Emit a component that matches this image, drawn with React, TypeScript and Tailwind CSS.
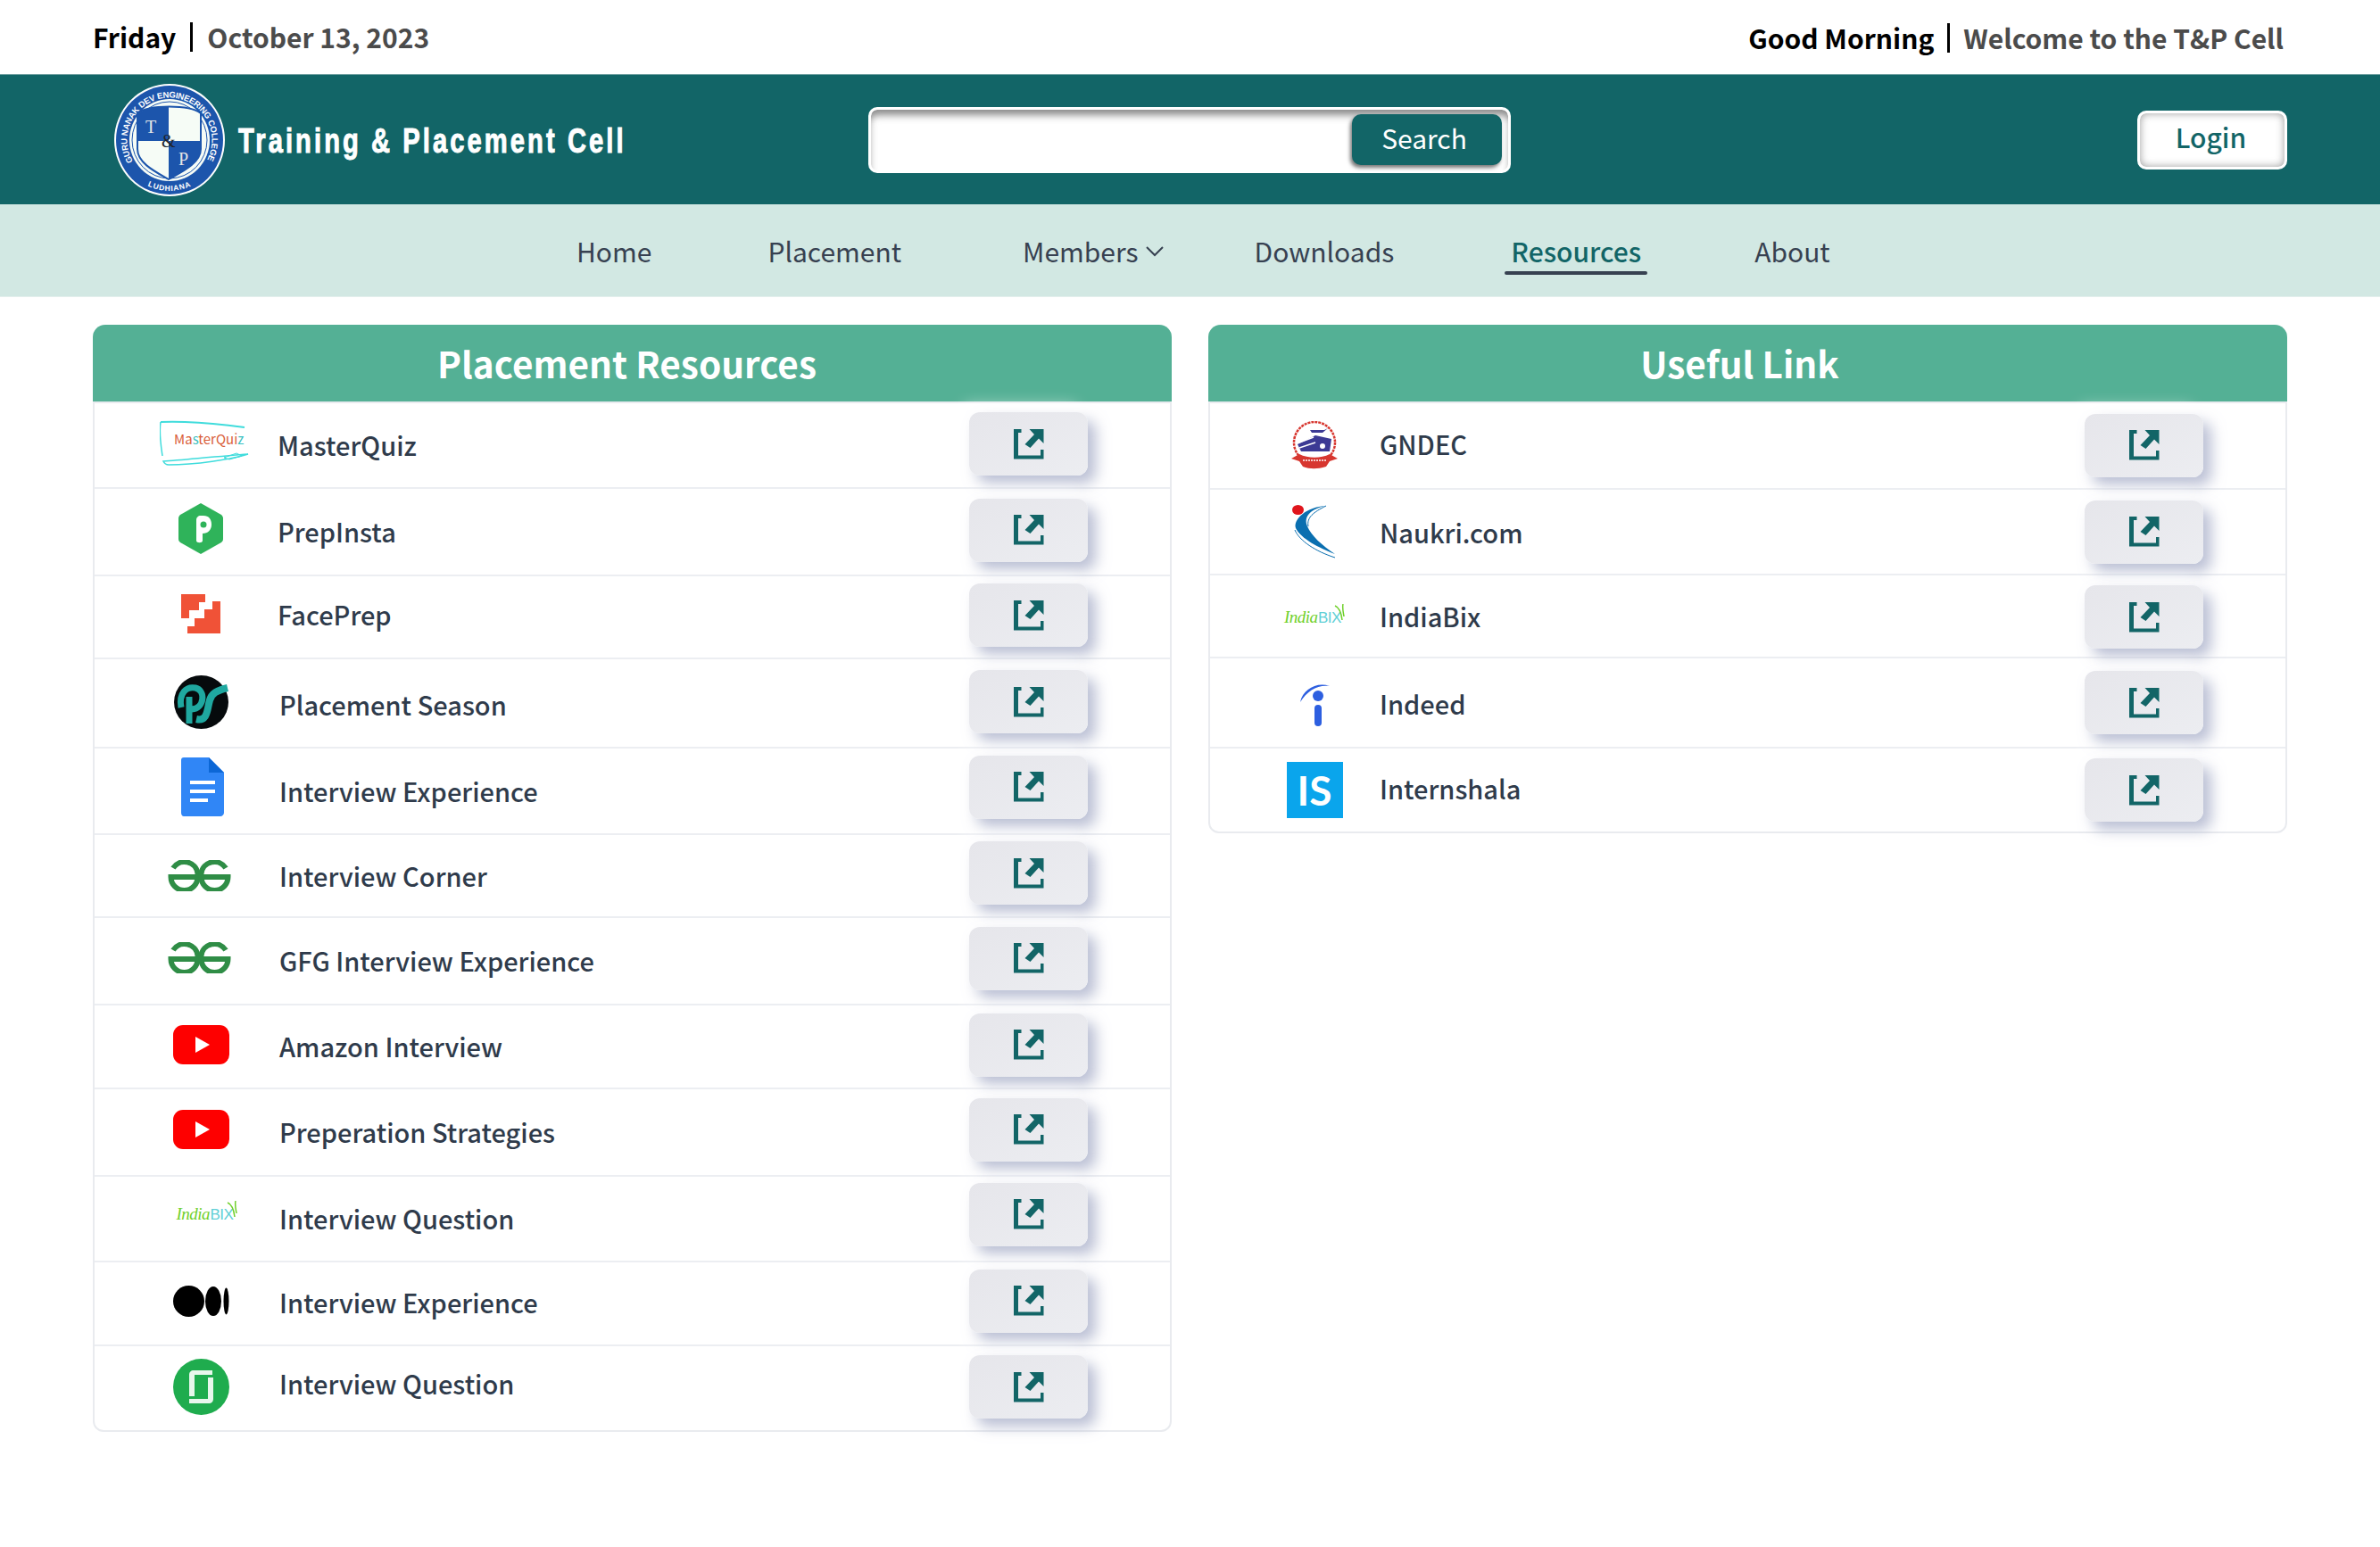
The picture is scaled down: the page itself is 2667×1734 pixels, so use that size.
import type { ReactNode } from 'react'

const sans = "font-['Noto_Sans_CJK_SC','Source_Sans_3','Noto_Sans',sans-serif]"

function LinkBtn({ offset }: { offset: string }) {
  return (
    <button
      className={`relative z-10 flex h-[71px] w-[133px] items-center justify-center rounded-xl bg-gradient-to-br from-[#e6e6eb] to-[#ecedf1] shadow-[9px_9px_16px_rgba(163,170,198,0.75),-9px_-9px_16px_rgba(255,255,255,0.5)] ${offset}`}
    >
      <svg width="34" height="34" viewBox="0 0 34 34" fill="#126567">
        <path d="M0 0H8.5V4H5V29.5H30V23H33.5V33.5H0Z" />
        <path d="M17.5 0H33.5V16L28 10.5L18.5 21L12.5 17L23 6Z" />
      </svg>
    </button>
  )
}

function MasterQuizLogo() {
  return (
    <div className="relative h-[52px] w-[100px]">
      <svg className="absolute inset-0" width="100" height="52" viewBox="0 0 100 52" fill="none" stroke="#3fdcdc">
        <path d="M1 2C25 1 50 2 95 8" strokeWidth="2" />
        <path d="M1 2C-1 14 1 26 3 40" strokeWidth="1.5" />
        <path d="M4 46C30 44 70 40 99 38C80 44 40 50 10 50C7 50 5 48 4 46Z" strokeWidth="1.5" />
        <path d="M72 42L86 37L92 40L78 44Z" strokeWidth="1" />
      </svg>
      <span className="absolute left-[16px] top-[11px] font-['Noto_Sans_CJK_SC',sans-serif] text-[15px] leading-[20px] text-[#d9603a]">
        Ma<span className="text-[#3bbfc0]">s</span>terQui<span className="text-[#3bbfc0]">z</span>
      </span>
    </div>
  )
}

function PrepInstaLogo() {
  return (
    <svg width="50" height="57" viewBox="0 0 50 57">
      <path d="M25 0L48 13C49 14 50 15 50 17V40C50 42 49 43 48 44L25 57L2 44C1 43 0 42 0 40V17C0 15 1 14 2 13Z" fill="#2fb35a" />
      <path d="M20 42V19C20 16 22 14 25 14H28C34 14 37 18 37 24C37 30 33 34 27 34V42C27 45 20 45 20 42Z" fill="#fff" />
      <circle cx="28" cy="24" r="3.5" fill="#2fb35a" />
    </svg>
  )
}

function FacePrepLogo() {
  return (
    <svg width="44" height="44" viewBox="0 0 44 44" fill="#f05237">
      <path d="M0 0H27V9H20V18H9V27H0Z" />
      <path d="M44 8V44H7V36H15V27H26V17H35V8Z" />
    </svg>
  )
}

function PlacementSeasonLogo() {
  return (
    <svg width="61" height="60" viewBox="0 0 61 60" fill="none">
      <ellipse cx="30.5" cy="30" rx="30.5" ry="30" fill="#060a0c" />
      <path d="M17 54V24M8 36C5 20 14 12 24 14C36 17 34 37 20 38" stroke="#1fa8a0" strokeWidth="7" />
      <path d="M25 49C38 52 37 38 40 28C42 20 48 17 60 14" stroke="#1fa8a0" strokeWidth="8" />
    </svg>
  )
}

function DocsLogo() {
  return (
    <svg width="48" height="66" viewBox="0 0 48 66">
      <path d="M3 0H31L48 17V62C48 64 46 66 44 66H3C1 66 0 64 0 62V3C0 1 1 0 3 0Z" fill="#3086f6" />
      <path d="M31 0L48 17H31Z" fill="#0c67d6" />
      <path d="M10 26H38V30H10ZM10 36H38V40H10ZM10 46H30V50H10Z" fill="#fff" />
    </svg>
  )
}

function GfgLogo() {
  return (
    <svg width="71" height="35" viewBox="0 0 71 35" fill="none" stroke="#2f8d46" strokeWidth="6">
      <path d="M6 9A15 15 0 0 1 33.5 15V19A15 15 0 0 1 3.5 19H33.5" />
      <path d="M65 9A15 15 0 0 0 37.5 15V19A15 15 0 0 0 67.5 19H37.5" />
    </svg>
  )
}

function YoutubeLogo() {
  return (
    <svg width="63" height="44" viewBox="0 0 63 44">
      <rect width="63" height="44" rx="11" fill="#fe0000" />
      <path d="M25 13L41 22L25 31Z" fill="#fff" />
    </svg>
  )
}

function IndiaBixLogo() {
  return (
    <div className="relative h-[26px] w-[68px]">
      <span className="absolute left-0 top-0 font-['Liberation_Serif',serif] text-[19px] italic leading-[24px] tracking-[-0.5px] text-[#6fd02a]">
        India
      </span>
      <span className="absolute left-[38px] top-[1px] font-['Liberation_Sans',sans-serif] text-[17px] leading-[24px] tracking-[-0.5px] text-[#5fcfd6]">
        BIX
      </span>
      <svg className="absolute right-0 top-[-3px]" width="12" height="18" viewBox="0 0 12 18" fill="none" stroke="#6fd02a" strokeWidth="1.5">
        <path d="M1 2C6 4 8 10 9 18M10 0C9 4 10 8 11 14" />
      </svg>
    </div>
  )
}

function MediumLogo() {
  return (
    <svg width="63" height="35" viewBox="0 0 63 35" fill="#000">
      <ellipse cx="17.5" cy="17.5" rx="17.5" ry="17.5" />
      <ellipse cx="45" cy="17.5" rx="9" ry="16.5" />
      <ellipse cx="59.5" cy="17.5" rx="3" ry="15" />
    </svg>
  )
}

function GlassdoorLogo() {
  return (
    <svg width="63" height="63" viewBox="0 0 63 63">
      <circle cx="31.5" cy="31.5" r="31.5" fill="#1fac4e" />
      <path d="M18 42V18C18 15 20 13 23 13H44V18H24V42ZM45 21V45C45 48 43 50 40 50H18V45H39V21Z" fill="#e8f7ec" />
    </svg>
  )
}

function GndecLogo() {
  return (
    <svg width="54" height="54" viewBox="0 0 54 54" fill="none">
      <ellipse cx="27" cy="24" rx="23" ry="23" fill="#fff" stroke="#d7362f" strokeWidth="2.5" strokeDasharray="3 1" />
      <path d="M8 26L28 16L46 20L44 34H12Z" fill="#3c3a94" />
      <path d="M22 10H38L42 8L36 13H24Z" fill="#3c3a94" />
      <path d="M10 24L26 18M10 30L28 24" stroke="#fff" strokeWidth="1.5" />
      <circle cx="36" cy="28" r="4" fill="#fff" stroke="#3c3a94" strokeWidth="2" />
      <path d="M1 42L10 37C20 42 34 42 44 37L53 42L44 45L40 51C30 54 22 54 14 51L10 45Z" fill="#d7362f" />
      <path d="M14 44H40" stroke="#fff" strokeWidth="1.5" strokeDasharray="2 1" />
    </svg>
  )
}

function NaukriLogo() {
  return (
    <svg width="50" height="60" viewBox="0 0 50 60" fill="none">
      <ellipse cx="6.5" cy="5.5" rx="6.5" ry="5.5" fill="#e0151c" />
      <path d="M38 1C22 4 12 12 17 24C21 34 34 46 48 55C30 48 10 38 4 26C1 16 16 2 38 1Z" fill="#0a6fb0" />
      <path d="M3 28C8 40 26 52 48 59" stroke="#0a6fb0" strokeWidth="1" />
      <path d="M38 1C24 8 16 14 18 24" stroke="#0a6fb0" strokeWidth="1" />
    </svg>
  )
}

function IndeedLogo() {
  return (
    <svg width="33" height="48" viewBox="0 0 33 48" fill="none">
      <path d="M0 21C3 7 18 -2 33 3C20 1 8 8 0 21Z" fill="#2d5fe0" />
      <circle cx="20" cy="14" r="6" fill="#2d5fe0" />
      <rect x="16" y="24" width="8" height="24" rx="4" fill="#2d5fe0" />
    </svg>
  )
}

function InternshalaLogo() {
  return (
    <div className="flex h-[63px] w-[63px] items-center justify-center bg-[#0aa5ec] font-['Lato',sans-serif] text-[46px] font-bold leading-none text-white">
      IS
    </div>
  )
}

type Row = { name: string; logo: ReactNode; height: string; offset: string; logoCls?: string; textCls?: string }

const placementRows: Row[] = [
  { name: 'MasterQuiz', logo: <MasterQuizLogo />, height: 'h-[96px]', offset: 'mb-[3px]', logoCls: 'ml-[8px] mb-[5px]', textCls: '-ml-[2px]' },
  { name: 'PrepInsta', logo: <PrepInstaLogo />, height: 'h-[98px]', offset: 'mb-[4px]', logoCls: 'mb-[8px]', textCls: '-ml-[2px]' },
  { name: 'FacePrep', logo: <FacePrepLogo />, height: 'h-[93px]', offset: 'mb-[4px]', logoCls: 'mb-[7px]', textCls: '-ml-[2px] mb-[6px]' },
  { name: 'Placement Season', logo: <PlacementSeasonLogo />, height: 'h-[100px]', offset: 'mb-[3px]', logoCls: 'mb-[2px]', textCls: 'mt-[3px]' },
  { name: 'Interview Experience', logo: <DocsLogo />, height: 'h-[97px]', offset: 'mb-[9px]', logoCls: 'ml-[3px] mb-[9px]' },
  { name: 'Interview Corner', logo: <GfgLogo />, height: 'h-[93px]', offset: 'mb-[6px]', logoCls: 'mr-[3px]' },
  { name: 'GFG Interview Experience', logo: <GfgLogo />, height: 'h-[98px]', offset: 'mb-[6px]', logoCls: 'mr-[3px] mb-[7px]' },
  { name: 'Amazon Interview', logo: <YoutubeLogo />, height: 'h-[94px]', offset: 'mb-[4px]', logoCls: 'mb-[5px]' },
  { name: 'Preperation Strategies', logo: <YoutubeLogo />, height: 'h-[98px]', offset: 'mb-[6px]', logoCls: 'mb-[6px]' },
  { name: 'Interview Question', logo: <IndiaBixLogo />, height: 'h-[96px]', offset: 'mb-[10px]', logoCls: 'ml-[13px] mb-[8px]' },
  { name: 'Interview Experience', logo: <MediumLogo />, height: 'h-[94px]', offset: 'mb-[6px]', logoCls: 'mb-[6px]', textCls: 'mb-[2px]' },
  { name: 'Interview Question', logo: <GlassdoorLogo />, height: 'h-[94px]', offset: 'mb-[3px]', logoCls: 'mb-[4px]', textCls: 'mb-[10px]' },
]

const usefulRows: Row[] = [
  { name: 'GNDEC', logo: <GndecLogo />, height: 'h-[97px]', offset: 'mb-[1px]', logoCls: 'mb-[1px]', textCls: 'mb-[3px]' },
  { name: 'Naukri.com', logo: <NaukriLogo />, height: 'h-[96px]', offset: 'mb-[0px]', logoCls: 'mb-[1px]', textCls: 'mt-[2px]' },
  { name: 'IndiaBix', logo: <IndiaBixLogo />, height: 'h-[93px]', offset: '-mb-[2px]', logoCls: 'mt-[4px]' },
  { name: 'Indeed', logo: <IndeedLogo />, height: 'h-[101px]', offset: 'mb-[0px]', logoCls: 'mt-[4px]', textCls: 'mt-[2px]' },
  { name: 'Internshala', logo: <InternshalaLogo />, height: 'h-[93px]', offset: 'mb-[0px]', textCls: 'mb-[3px]' },
]

function Panel({
  title,
  rows,
  titleCls,
  cellCls,
}: {
  title: string
  rows: Row[]
  titleCls: string
  cellCls: string
}) {
  return (
    <section className="w-[1209px]">
      <h2 className={`flex h-[86px] items-center justify-center rounded-t-[14px] bg-[#54b095] text-[40.5px] font-bold text-white ${titleCls}`}>
        {title}
      </h2>
      <div className="rounded-b-xl border-2 border-[#e9ebef]">
        {rows.map((row, i) => (
          <div
            key={i}
            className={`flex items-center border-b-2 border-[#eceef2] last:border-b-0 ${row.height}`}
          >
            <div className={`flex w-[120px] shrink-0 items-center justify-center ${cellCls}`}>
              <div className={row.logoCls}>{row.logo}</div>
            </div>
            <span className={`text-[29px] font-medium text-[#2f3b4b] ${row.textCls ?? ''}`}>{row.name}</span>
            <div className="ml-auto mr-[92px]">
              <LinkBtn offset={row.offset} />
            </div>
          </div>
        ))}
      </div>
    </section>
  )
}

function Seal() {
  return (
    <svg width="126" height="128" viewBox="0 0 126 128" className="shrink-0">
      <ellipse cx="63" cy="64" rx="62" ry="63" fill="#fff" />
      <ellipse cx="63" cy="64" rx="60" ry="61" fill="#1c55ac" />
      <ellipse cx="63" cy="64" rx="45" ry="46" fill="#f6fcf6" />
      <ellipse cx="63" cy="64" rx="42" ry="43" fill="none" stroke="#1c55ac" strokeWidth="1" />
      <defs>
        <path id="sealTop" d="M22 88A47.5 47.5 0 1 1 104 88" />
        <path id="sealBottom" d="M34 113A57 57 0 0 0 92 113" />
      </defs>
      <text className="font-['Liberation_Sans',sans-serif]" fontSize="9.5" fontWeight="700" fill="#fff">
        <textPath href="#sealTop" textLength="197">GURU NANAK DEV ENGINEERING COLLEGE</textPath>
      </text>
      <text className="font-['Liberation_Sans',sans-serif]" fontSize="8.5" fontWeight="700" fill="#fff">
        <textPath href="#sealBottom" startOffset="5" textLength="50">LUDHIANA</textPath>
      </text>
      <path d="M27 34C40 24 85 24 98 34V74C98 90 76 100 62 108C48 100 27 90 27 74Z" fill="#f6fcf6" stroke="#1c55ac" strokeWidth="2" />
      <path d="M27 34C36 28 50 26 62 26V65H27Z" fill="#1c55ac" />
      <path d="M62 65H98V74C98 90 76 100 62 108Z" fill="#1c55ac" />
      <g className="font-['Liberation_Serif',serif]">
        <text x="36" y="56" fontSize="20" fill="#e6e6e6">T</text>
        <text x="54" y="72" fontSize="20" fill="#20242c">&amp;</text>
        <text x="73" y="92" fontSize="20" fill="#e6e6e6">P</text>
      </g>
    </svg>
  )
}

export default function App() {
  return (
    <div className={`min-h-[1734px] bg-white ${sans}`}>
      {/* top strip */}
      <div className="flex h-[83px] items-center justify-between pl-[104px] pr-[108px] text-[30px] font-bold">
        <div className="flex items-center">
          <span className="text-black">Friday</span>
          <span className="mx-[16px] h-[33px] w-[3px] bg-black" />
          <span className="font-semibold text-[#4b4b4b]">October 13, 2023</span>
        </div>
        <div className="mt-[2px] flex items-center">
          <span className="text-black">Good Morning</span>
          <span className="mx-[15px] h-[33px] w-[3px] bg-black" />
          <span className="font-semibold text-[#4b4b4b]">Welcome to the T&amp;P Cell</span>
        </div>
      </div>

      {/* brand bar */}
      <header className="flex h-[146px] items-center justify-between border-t border-[#6f9fa0] bg-[#126567] pl-[127px] pr-[104px]">
        <div className="flex w-[846px] items-center">
          <Seal />
          <span className="ml-[14px] mt-[3px] origin-left scale-x-[0.767] whitespace-nowrap font-['Liberation_Sans',sans-serif] text-[38px] font-bold tracking-[4px] text-white [-webkit-text-stroke:1px_white]">
            Training &amp; Placement Cell
          </span>
        </div>
        <div className="flex h-[74px] w-[720px] items-center justify-end rounded-[10px] border-[3px] border-white bg-white pr-[7px] shadow-[inset_0_8px_8px_-2px_rgba(100,100,100,0.75)]">
          <button className="h-[57px] w-[168px] rounded-[10px] bg-[#126567] pb-[5px] pr-[6px] text-[30px] leading-none text-white shadow-[-2px_3px_4px_rgba(60,60,60,0.7)]">
            Search
          </button>
        </div>
        <button className="ml-auto h-[66px] w-[168px] rounded-[10px] border-[3px] border-white bg-white pb-[7px] pr-[3px] text-[30px] font-medium leading-none text-[#126567] shadow-[inset_0_0_10px_rgba(90,90,90,0.6)]">
          Login
        </button>
      </header>

      {/* nav */}
      <nav className="flex h-[104px] items-center border-b border-[#e3efec] bg-[#d2e8e3] pl-[646px] pt-[2px] text-[30px] text-[#374151]">
        <a>Home</a>
        <a className="ml-[130px]">Placement</a>
        <a className="ml-[136px] flex items-center">
          Members
          <svg className="ml-[8px]" width="20" height="12" viewBox="0 0 20 12" fill="none" stroke="#374151" strokeWidth="2">
            <path d="M1 1L10 10L19 1" />
          </svg>
        </a>
        <a className="ml-[102px]">Downloads</a>
        <a className="relative ml-[131px] font-medium text-[#126567]">
          Resources
          <span className="absolute -bottom-[4px] -left-[7px] -right-[7px] h-[4px] rounded-full bg-[#374151]" />
        </a>
        <a className="ml-[127px]">About</a>
      </nav>

      <main className="flex gap-[41px] px-[104px] pt-[31px]">
        <Panel title="Placement Resources" rows={placementRows} titleCls="pr-[12px]" cellCls="ml-[59px] mr-[28px]" />
        <Panel title="Useful Link" rows={usefulRows} titleCls="pr-[18px]" cellCls="ml-[57px] mr-[13px]" />
      </main>
    </div>
  )
}
